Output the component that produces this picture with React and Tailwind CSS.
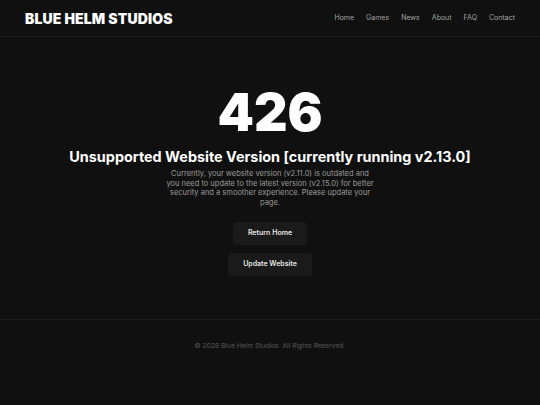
import React from 'react';

const links = ['Home', 'Games', 'News', 'About', 'FAQ', 'Contact'];

export default function App() {
  return (
    <div className="min-h-screen bg-[#101010] text-white font-['Inter',sans-serif]">
      {/* Header */}
      <header className="h-[37px] flex items-center justify-between px-[25px] border-b border-[#1c1c1c]">
        <span className="text-[14px] font-black tracking-[0.01em]">BLUE HELM STUDIOS</span>
        <nav className="flex items-center gap-[12px] text-[7px] text-[#a3a3a3]">
          {links.map((l) => (
            <a key={l} href="#">{l}</a>
          ))}
        </nav>
      </header>

      {/* Main */}
      <main className="h-[283px] flex flex-col items-center pt-[48px] border-b border-[#1c1c1c]">
        <h1 className="text-[52px] leading-[56px] font-black">426</h1>
        <h2 className="mt-[6px] text-[14.4px] leading-[20px] font-bold">
          Unsupported Website Version [currently running v2.13.0]
        </h2>
        <p className="mt-[2px] w-[212px] text-center text-[7.5px] leading-[9.7px] text-[#9a9a9a]">
          Currently, your website version (v2.11.0) is outdated and you need to update to the latest version (v2.15.0) for better security and a smoother experience. Please update your page.
        </p>
        <div className="mt-[14px] flex flex-col items-center gap-[8px]">
          <button className="h-[23px] px-[15px] rounded-[4px] bg-[#1a1a1a] text-[7px] font-semibold text-[#e5e5e5]">
            Return Home
          </button>
          <button className="h-[23px] px-[15px] rounded-[4px] bg-[#1a1a1a] text-[7px] font-semibold text-[#e5e5e5]">
            Update Website
          </button>
        </div>
      </main>

      {/* Footer */}
      <footer className="pt-[21px] pb-[20px] text-center text-[6.7px] text-[#5a5a5a]">
        © 2026 Blue Helm Studios. All Rights Reserved.
      </footer>
    </div>
  );
}
